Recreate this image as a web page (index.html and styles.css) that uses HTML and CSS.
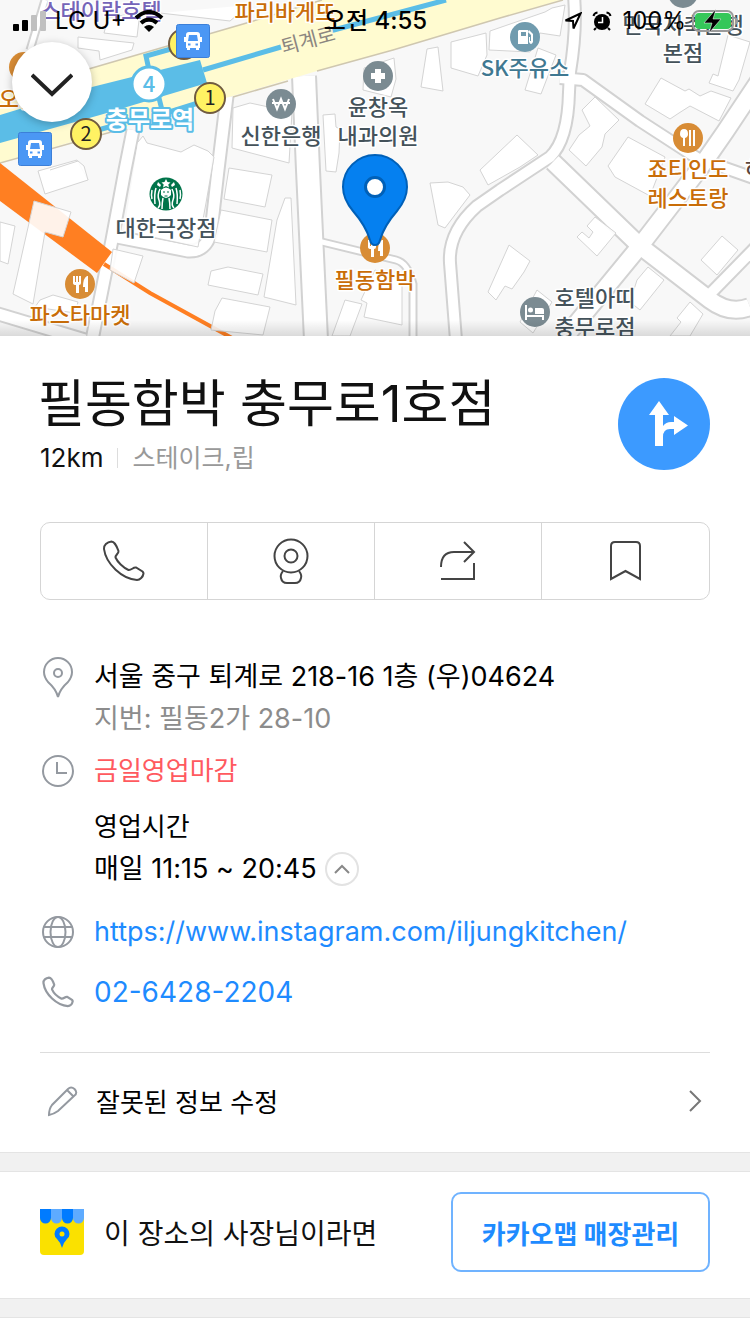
FILE: index.html
```
<!DOCTYPE html>
<html lang="ko">
<head>
    <meta charset="UTF-8">
    <meta name="viewport" content="width=device-width, initial-scale=1.0">
    <title>필동함박 충무로1호점</title>
    <link rel="stylesheet" href="styles.css">
</head>
<body>
    <section class="map">
        <svg class="map-canvas" viewBox="0 0 750 336" preserveAspectRatio="xMidYMin slice" role="img" aria-label="지도">
            <defs>
                <g id="roads">
                    <path class="w13" d="M133 130 L125 170 L112 240 L92 340"/>
                    <path class="w13" d="M112 236 L188 251 Q206 252 211 232 L218 170 L227 96"/>
                    <path class="w23" d="M304 76 L308 170 L316 340"/>
                    <path class="w4" d="M318 241 L396 260 Q408 263 413 284 L413 340"/>
                    <path class="w12" d="M574 -4 Q577 30 570 72 L569 92 Q568 140 550 157 L500 190 L477 206 Q448 232 450 263 L456 340"/>
                    <path class="w12" d="M560 78 L583 80 L640 121 L697 158 L765 182"/>
                    <path class="w18" d="M553 162 L640 246 L710 300 Q730 315 750 307"/>
                    <path class="w18" d="M765 72 L725 132 L700 168 L640 246 L566 336"/>
                    <path class="w12" d="M708 296 L755 248"/>
                    <path class="w13" d="M-5 313 L85 340"/>
                    <path class="w4" d="M45 0 L30 50"/>
                </g>
            </defs>
            <rect class="ground" width="750" height="336"/>
            <use href="#roads" class="road-edge"/>
            <use href="#roads" class="road-fill"/>

            <!-- main road -->
            <path class="main-road" d="M-5 97 L92 68 L250 22 L326 -2 L567 -2 L500 18 L393 50 L317 71 L250 91 L-5 164 Z"/>
            <path class="main-road-line" d="M0 95 L92 68 L250 22 L322 0 M0 163 L122 129 M233 97 L288 81 M317 71 L393 50 L500 18 L563 0"/>

            <!-- subway lines -->
            <path class="subway-area" d="M0 115 L92 87 L200 60 L207 83 L100 115 L0 143 Z"/>
            <path class="subway-line" d="M203 70 L281 47 M330 31 L446 0"/>
            <path class="subway-link" d="M149 70 L146 56 L178 47 M159 98 L163 114 L198 103 M98 130 L120 124"/>
            <path class="orange-area" d="M0 163 L112 252 L97 273 L0 201 Z"/>
            <path class="orange-line" d="M104 264 L150 293 L232 338"/>

            <!-- buildings -->
            <g class="buildings">
                <path d="M34 201 L71 212 L63 237 L45 232 L33 304 L13 294 L29 223 Z"/>
                <path d="M113 249 L143 256 L134 283 L110 270 Z"/>
                <path d="M38 171 L77 160 L88 180 L45 194 Z"/>
                <path d="M0 222 L15 226 L8 264 L0 261 Z"/>
                <path d="M78 37 L134 43 L132 50 L100 60 L99 51 L78 48 Z"/>
                <path d="M108 18 L140 12 L137 37 L104 33 Z"/>
                <path d="M160 13 L230 21 L249 5"/>
                <path d="M138 142 L143 136 L147 143 L181 152 L194 145 L208 151 L214 157 L206 203 L198 247 L124 231"/>
                <path d="M50 170 L78 161 L84 166 L88 180"/>
                <path d="M233 108 L250 103 L292 112 L289 163 L232 148 Z"/>
                <path d="M229 168 L272 175 L265 207 L224 199 Z"/>
                <path d="M221 210 L272 220 L267 252 L214 242 Z"/>
                <path d="M211 271 L228 267 L263 274 L258 295 L208 285 Z"/>
                <path d="M222 298 L270 307 L263 335 L211 330 L215 311 Z"/>
                <path d="M285 198 L291 198 L296 305 L264 297 L277 220 Z"/>
                <path d="M323 115 L335 114 L336 127 L340 129 L339 153 L336 172 L326 171 Z"/>
                <path d="M364 68 L394 58 L396 79 L391 97 L363 90 Z"/>
                <path d="M427 49 L438 47 L443 91 L421 87 Z"/>
                <path d="M451 42 L486 33 L487 55 L478 76 L451 68 Z"/>
                <path d="M490 31 L545 12 L552 8 L565 5 L560 36 L540 33 L530 52 L489 50 Z"/>
                <path d="M430 183 L448 182 L463 187 L470 195 L445 228 L438 225 Z"/>
                <path d="M538 48 L556 55 L541 94 L525 90 Z"/>
                <path d="M595 97 L619 120 L605 134 L602 147 L586 166 L569 150 L579 135 L590 126 L582 110 Z"/>
                <path d="M628 137 L665 157 L650 196 L615 177 L608 166 Z"/>
                <path d="M661 78 L685 91 L689 89 L700 96 L711 91 L731 98 L719 121 L694 108 L690 106 L679 113 L670 119 L645 104 Z"/>
                <path d="M728 35 L750 42 L739 80 L733 91 L709 83 L713 74 L718 76 Z"/>
                <path d="M517 135 L538 155 L520 167 L488 185 L480 170 Z"/>
                <path d="M595 217 L616 233 L597 256 L577 237 L582 232 L589 238 L593 232 L587 226 Z"/>
                <path d="M509 245 L530 261 L524 272 L512 289 L505 286 L496 300 L488 292 Z"/>
                <path d="M648 267 L664 280 L640 310 L630 302 L637 280 Z"/>
                <path d="M722 236 L738 250 L717 275 L701 260 Z"/>
                <path d="M690 302 L703 314 L690 336 L670 336 L681 322 L677 318 Z"/>
                <path d="M345 300 L362 304 L350 336 L332 336 Z"/>
                <path d="M375 270 L402 280 L402 325 L364 317 L367 303 L361 300 Z"/>
                <path d="M537 290 L552 302 L533 333 L520 322 Z"/>
                <path d="M53 295 L78 302 L75 313 L35 307 L40 300 Z"/>
            </g>

            <!-- place marks -->
            <g class="mark-gray">
                <circle cx="281" cy="104" r="15"/>
                <circle cx="378" cy="76" r="15"/>
                <circle cx="535" cy="312" r="15"/>
                <circle cx="683" cy="-7" r="15"/>
            </g>
            <g class="mark-orange">
                <circle cx="24" cy="67" r="15"/>
                <circle cx="80" cy="284" r="15"/>
                <circle cx="375" cy="248" r="15"/>
                <circle cx="688" cy="138" r="15"/>
            </g>
            <circle class="mark-teal" cx="525" cy="37" r="15"/>
            <path class="glyph-line" d="M273 99 L277 109 L281 99 L285 109 L289 99 M272 103 H290"/>
            <path class="glyph" d="M375 69 h6 v4 h4 v6 h-4 v4 h-6 v-4 h-4 v-6 h4 z"/>
            <path class="glyph" d="M525 305 h2 v10 h17 v5 h-2 v-3 h-15 v3 h-2 z M528 310 a2.500 2.500 0 1 0 5 0 a2.500 2.500 0 1 0 -5 0 M535 308 h7 q2 0 2 2 v4 h-9 z"/>
            <path class="glyph" fill-rule="evenodd" d="M519 30 h9 v14 h-10 v-13 z M521 32 v4 h5 v-4 z M529 30 l4 4 v8 q-2 4 -4 0 v-5 h1 v4 h1 v-6 l-3 -3 z"/>
            <g id="fork">
                <path class="glyph" d="M73 276 h2 v6 h1 v-6 h2 v6 h1 v-6 h2 v7 q0 2 -2 2 v8 h-3 v-8 q-3 0 -3 -2 z M87 276 h1 v16 h-3 v-5 h-2 q0 -9 4 -11 z"/>
            </g>
            <use href="#fork" x="295" y="-36"/>
            <path class="glyph" d="M680 134 q0 -5 4 -5 q4 0 4 5 q0 3 -3 4 v8 h-2 v-8 q-3 -1 -3 -4 z M689 130 h2 v16 h-2 z M693 130 h2 v16 h-2 z"/>

            <!-- coffee shop logo -->
            <circle cx="166" cy="194" r="16.500" fill="#00744a"/>
            <path class="glyph" d="M166 179 l1.500 3 3 .4 -2.200 2 .7 3 -3 -1.500 -3 1.500 .7 -3 -2.200 -2 3 -.4 z M158 182 l3 3 -1 2 -3 -2 z M174 182 l-3 3 1 2 3 -2 z"/>
            <path class="siren" d="M161 190 q5 -5 10 0 v5 q-5 6 -10 0 z"/>
            <path class="siren-line" d="M160 189 q-3 6 -1 11 t-1 8 M163 198 q-1 5 -1 11 M169 198 q1 5 1 11 M172 189 q3 6 1 11 t1 8 M156 188 q-2 6 -1 16 M176 188 q2 6 1 16 M152 190 q-1 5 0 9 M180 190 q1 5 0 9"/>
            <path d="M163 192 h2 M167 192 h2 M164.500 196 h3" stroke="#00744a" stroke-width="1"/>

            <!-- station exits and bus stops -->
            <g class="exit">
                <circle cx="184" cy="44" r="15"/>
                <circle cx="210" cy="98" r="15"/>
                <circle cx="86" cy="134" r="15"/>
                <text x="210" y="105">1</text>
                <text x="86" y="141">2</text>
            </g>
            <circle cx="149" cy="84" r="17" fill="#fff" stroke="#5bbde7" stroke-width="3"/>
            <text class="line-number" x="149" y="92">4</text>
            <g id="bus">
                <rect x="18.500" y="132.500" width="33" height="33" rx="2" fill="#4b97f4" stroke="#3c7fd8"/>
                <path class="glyph" fill-rule="evenodd" d="M28 143 q0 -3 3 -3 h8 q3 0 3 3 v2 h2 v5 h-2 v6 h-1 v2 h-3 v-2 h-6 v2 h-3 v-2 h-1 v-6 h-2 v-5 h2 z M31 143 l-1 6 h10 l-1 -6 z M30 151.500 v2 h2.500 v-2 z M37.500 151.500 v2 h2.500 v-2 z"/>
            </g>
            <use href="#bus" x="158" y="-108"/>

            <!-- labels -->
            <g class="label">
                <text class="purple" x="101" y="19">스테이락호텔</text>
                <text class="brown" x="285" y="20">파리바게뜨</text>
                <text class="brown" x="19" y="107">오늘</text>
                <text class="road-name" x="308" y="47" transform="rotate(-15 309 40)">퇴계로</text>
                <text class="station" x="150" y="128">충무로역</text>
                <text x="281" y="144">신한은행</text>
                <text x="378" y="115">윤창옥</text>
                <text x="378" y="144">내과의원</text>
                <text class="teal" x="525" y="76">SK주유소</text>
                <text x="683" y="33">민국저축은행</text>
                <text x="683" y="61">본점</text>
                <text class="brown" x="688" y="177">죠티인도</text>
                <text class="brown" x="688" y="206">레스토랑</text>
                <text class="dark" x="755" y="177">하</text>
                <text x="166" y="236">대한극장점</text>
                <text class="brown" x="80" y="323">파스타마켓</text>
                <text class="brown" x="375" y="288">필동함박</text>
                <text x="595" y="306">호텔아띠</text>
                <text x="595" y="335">충무로점</text>
            </g>

            <!-- selected place -->
            <path d="M375 245 Q371 245 370 240 Q366 226 353 211 Q343 199 343 187 A32 32 0 0 1 407 187 Q407 199 397 211 Q384 226 380 240 Q379 245 375 245 Z" fill="#0580f0" stroke="#0060b8" stroke-width="2"/>
            <circle cx="375" cy="187" r="9.500" fill="#fff" stroke="#0060b8" stroke-width="3"/>
        </svg>
        <div class="map-shade"></div>

        <div class="status-bar">
            <div class="status-left">
                <svg width="34" height="20" viewBox="0 0 34 20" aria-hidden="true">
                    <rect x="0" y="13" width="6" height="7" rx="1"/>
                    <rect x="9" y="9" width="6" height="11" rx="1"/>
                    <rect class="dim" x="18" y="4" width="6" height="16" rx="1"/>
                    <rect class="dim" x="27" y="0" width="6" height="20" rx="1"/>
                </svg>
                <span>LG U+</span>
                <svg width="30" height="22" viewBox="0 0 30 22" aria-hidden="true">
                    <path class="wifi" d="M2 8 Q15 -4 28 8 M7 13 Q15 6 23 13"/>
                    <path d="M10 17 Q15 13 20 17 L15 22 Z"/>
                </svg>
            </div>
            <span class="status-time">오전 4:55</span>
            <div class="status-right">
                <svg width="18" height="18" viewBox="0 0 18 18" aria-hidden="true">
                    <path class="location" d="M16.500 1.500 L1.500 8.500 L9 9 L9.500 16.500 Z"/>
                </svg>
                <svg width="20" height="20" viewBox="0 0 20 20" aria-hidden="true">
                    <circle cx="10" cy="11" r="8"/>
                    <path class="alarm" d="M1.500 5 Q2 2 5.500 1.500 M14.500 1.500 Q18 2 18.500 5 M4 17 L2 19 M16 17 L18 19"/>
                    <path d="M10.500 6 V11.500 H6" fill="none" stroke="#fff" stroke-width="1.500"/>
                </svg>
                <span class="battery">100%
                    <svg width="46" height="24" viewBox="0 0 46 24" aria-hidden="true">
                        <rect x="1" y="2" width="40" height="20" rx="6" fill="none" stroke="#9a9a9a" stroke-width="2"/>
                        <rect x="3" y="4" width="36" height="16" rx="4" fill="#35c759"/>
                        <path d="M43 8 q3 1 3 4 t-3 4 z" fill="#9a9a9a"/>
                        <path d="M24 0 L12 14 H20 L17 24 L29 10 H21 Z" stroke="#fff" stroke-width=".5"/>
                    </svg>
                </span>
            </div>
        </div>

        <button type="button" class="close-btn" aria-label="닫기">
            <svg width="42" height="24" viewBox="0 0 42 24" aria-hidden="true"><path d="M1 2 L21 21 L41 2"/></svg>
        </button>
    </section>

    <main>
        <section class="place">
            <header class="place-header">
                <div>
                    <h1>필동함박 충무로1호점</h1>
                    <p class="summary">12km<span class="category">스테이크,립</span></p>
                </div>
                <button type="button" class="route-btn" aria-label="길찾기">
                    <svg width="40" height="46" viewBox="0 0 40 46" aria-hidden="true"><path d="M11 0 L21 14 H15 V25 Q18 21 23 21 H26 V15 L40 24.500 L26 34 V28 H22 Q15 28 15 36 V45 H7 V14 H1 Z"/></svg>
                </button>
            </header>

            <div class="actions">
                <button type="button" aria-label="전화">
                    <svg width="44" height="44" viewBox="0 0 44 44" aria-hidden="true"><path id="phone" d="M9.500 2.500 C5 3 1.500 6 2 10 C4 25 20 40 35 41 C38 41 41 38 41.500 34.500 Q41.500 33.500 40.500 32.500 L34 28.500 C31 28 29.500 31.500 26.500 31 C21 28.500 15.500 23 13.500 18.500 C13 16 17 14.500 16.500 12 C15.500 9 12.500 2.500 9.500 2.500 Z"/></svg>
                </button>
                <button type="button" aria-label="로드뷰">
                    <svg width="36" height="46" viewBox="0 0 36 46" aria-hidden="true"><circle cx="18" cy="18" r="16.500"/><circle cx="18" cy="18" r="6.500"/><path d="M10 33 Q7 37 8 40 Q9 45 14 45 H22 Q27 45 28 40 Q29 37 26 33"/></svg>
                </button>
                <button type="button" aria-label="공유">
                    <svg width="36" height="40" viewBox="0 0 36 40" aria-hidden="true"><path d="M1 26 Q1 11 14 11 H34 M24 1 L34 11 L24 21 M34 22 V38 H1"/></svg>
                </button>
                <button type="button" aria-label="저장">
                    <svg width="32" height="40" viewBox="0 0 32 40" aria-hidden="true"><path d="M1 38 V5 Q1 1 5 1 H26 Q30 1 30 5 V38 L15.500 30 Z"/></svg>
                </button>
            </div>

            <div class="info">
                <div class="info-row">
                    <svg width="34" height="42" viewBox="0 0 34 42" aria-hidden="true"><path d="M16 41 Q14 33 6 26 Q2 21 2 16 A14 14 0 0 1 30 16 Q30 21 26 26 Q18 33 16 41 Z"/><circle cx="16" cy="17" r="4"/></svg>
                    <div class="address">
                        <p>서울 중구 퇴계로 218-16 1층 (우)04624</p>
                        <p class="muted">지번: 필동2가 28-10</p>
                    </div>
                </div>
                <div class="info-row">
                    <svg width="34" height="42" viewBox="0 0 34 42" aria-hidden="true"><circle cx="16" cy="21" r="15"/><path d="M15 12 V23 H25"/></svg>
                    <div>
                        <p class="closed">금일영업마감</p>
                        <div class="hours">
                            <p>영업시간</p>
                            <p class="hours-line">매일 11:15 ~ 20:45
                                <button type="button" class="fold-btn" aria-label="접기">
                                    <svg width="16" height="10" viewBox="0 0 16 10" aria-hidden="true"><path d="M1 9 L8 2 L15 9"/></svg>
                                </button>
                            </p>
                        </div>
                    </div>
                </div>
                <div class="info-row contact">
                    <svg width="34" height="42" viewBox="0 0 34 42" aria-hidden="true"><circle cx="16" cy="21" r="15"/><ellipse cx="16" cy="21" rx="7.500" ry="15"/><path d="M2 16 H30 M2 26 H30"/></svg>
                    <a href="https://www.instagram.com/iljungkitchen/">https://www.instagram.com/iljungkitchen/</a>
                </div>
                <div class="info-row contact">
                    <svg class="small-phone" width="34" height="42" viewBox="0 -6 46 56" aria-hidden="true"><use href="#phone"/></svg>
                    <a class="tel" href="tel:02-6428-2204">02-6428-2204</a>
                </div>
            </div>

            <a class="edit" href="#edit">
                <svg width="32" height="32" viewBox="0 0 32 32" aria-hidden="true"><path d="M3 30 Q3 24 6 20 L22 4 Q25 1 28.500 4 Q32 7.500 28.500 10.500 L12 26 Q8 29 3 30 Z M21 5 L27.500 11.500"/></svg>
                <span>잘못된 정보 수정</span>
                <svg class="chevron" width="14" height="22" viewBox="0 0 14 22" aria-hidden="true"><path d="M2 1 L12 11 L2 21"/></svg>
            </a>
        </section>

        <div class="gap"></div>

        <section class="owner">
            <svg width="44" height="46" viewBox="0 0 44 46" aria-hidden="true">
                <path d="M0 0 H44 V42 Q44 46 40 46 H4 Q0 46 0 42 Z" fill="#fae100"/>
                <path d="M0 0 H11 V9 A5.500 5.500 0 0 1 0 9 Z M22 0 H33 V9 A5.500 5.500 0 0 1 22 9 Z" fill="#007bff"/>
                <path d="M11 0 H22 V9 A5.500 5.500 0 0 1 11 9 Z M33 0 H44 V9 A5.500 5.500 0 0 1 33 9 Z" fill="#5eabff"/>
                <path d="M22 39 Q21 34 17 30 Q14.500 28 14.500 25 A7.500 7.500 0 0 1 29.500 25 Q29.500 28 27 30 Q23 34 22 39 Z" fill="#007bff"/>
                <circle cx="22" cy="25" r="2.500" fill="#fae100"/>
            </svg>
            <p>이 장소의 사장님이라면</p>
            <button type="button" class="manage-btn">카카오맵 매장관리</button>
        </section>

        <div class="gap"></div>
    </main>
</body>
</html>
```
FILE: styles.css
```
* {
    box-sizing: border-box;
}
body {
    font-family: Inter, "Noto Sans CJK KR", sans-serif;
    font-size: 26px;
    margin: 0;
    background-color: #fff;
    color: #111;
}
h1, p {
    margin: 0;
    font-weight: 400;
}
button {
    font: inherit;
    padding: 0;
    cursor: pointer;
}
a {
    color: #1e8bff;
    text-decoration: none;
}

/* map */
.map {
    position: relative;
    height: 336px;
    overflow: hidden;
}
.map-canvas {
    display: block;
    width: 100%;
    height: 100%;
}
.map-shade {
    position: absolute;
    left: 0;
    right: 0;
    bottom: 0;
    height: 16px;
    background: linear-gradient(rgba(0,0,0,0), rgba(0,0,0,0.12));
}
.ground {
    fill: #f8f8f8;
}
.road-edge, .road-fill {
    fill: none;
    stroke-linejoin: round;
}
.road-edge {
    stroke: #d2d2d2;
    --edge: 4px;
}
.road-fill {
    stroke: #fff;
    --edge: 0px;
}
.w4 {
    stroke-width: calc(5px + var(--edge));
}
.w12 {
    stroke-width: calc(10px + var(--edge));
}
.w13 {
    stroke-width: calc(11px + var(--edge));
}
.w18 {
    stroke-width: calc(16px + var(--edge));
}
.w23 {
    stroke-width: calc(22px + var(--edge));
}
.main-road {
    fill: #fffbd0;
}
.main-road-line {
    fill: none;
    stroke: #cfc7b0;
    stroke-width: 1.5;
}
.subway-area {
    fill: #5bbde7;
}
.subway-line, .subway-link {
    fill: none;
    stroke: #5bbde7;
    stroke-width: 5;
}
.orange-area {
    fill: #ff7f22;
}
.orange-line {
    fill: none;
    stroke: #ff7f22;
    stroke-width: 4;
}
.buildings {
    fill: rgba(255,255,255,0.9);
    stroke: #d4d4d4;
}
.mark-gray {
    fill: #7b8b92;
}
.mark-orange {
    fill: #d88c35;
}
.mark-teal {
    fill: #709bae;
}
.glyph, .siren {
    fill: #fff;
}
.glyph-line {
    fill: none;
    stroke: #fff;
    stroke-width: 2;
}
.siren-line {
    fill: none;
    stroke: #fff;
    stroke-width: 1.5;
}
.exit circle {
    fill: #fff263;
    stroke: #705b40;
    stroke-width: 2;
}
.exit text, .line-number {
    font-family: "Noto Sans CJK KR", sans-serif;
    font-size: 20px;
    text-anchor: middle;
    fill: #222;
}
.line-number {
    font-size: 22px;
    font-weight: 500;
    fill: #5bbde7;
}
.label {
    font-family: "Noto Sans CJK KR", sans-serif;
    font-size: 22px;
    font-weight: 500;
    text-anchor: middle;
    fill: #44525a;
    stroke: #fff;
    stroke-width: 3;
    stroke-linejoin: round;
    paint-order: stroke;
}
.label .purple {
    fill: #7564b8;
}
.label .brown {
    fill: #c96d08;
}
.label .teal {
    fill: #3f7891;
}
.label .dark {
    fill: #5b463d;
}
.label .road-name {
    font-size: 20px;
    font-weight: 400;
    fill: #8c8680;
    stroke: #fffbd0;
}
.label .station {
    font-size: 24px;
    font-weight: 700;
    fill: #fff;
    stroke: #5bbde7;
    stroke-width: 4;
}

/* status bar */
.status-bar {
    position: absolute;
    top: 0;
    left: 0;
    right: 0;
    display: grid;
    grid-template-columns: 1fr auto 1fr;
    align-items: center;
    padding: 0 12px 0 13px;
    font-size: 24px;
    line-height: 42px;
    color: #000;
}
.status-left, .status-right {
    display: flex;
    align-items: center;
    gap: 10px;
}
.status-left {
    gap: 8px;
}
.status-right {
    justify-content: flex-end;
}
.status-time {
    font-weight: 500;
}
.battery {
    display: flex;
    align-items: center;
    gap: 6px;
}
.dim {
    fill: #c0c0c0;
}
.wifi {
    fill: none;
    stroke: #000;
    stroke-width: 4;
}
.location, .alarm {
    fill: none;
    stroke: #000;
    stroke-width: 2;
}
.close-btn {
    position: absolute;
    top: 42px;
    left: 12px;
    display: flex;
    align-items: center;
    justify-content: center;
    width: 80px;
    height: 80px;
    padding-top: 6px;
    border: none;
    border-radius: 50%;
    background-color: #fff;
    box-shadow: 0 2px 8px rgba(0,0,0,0.25);
}
.close-btn path {
    fill: none;
    stroke: #222;
    stroke-width: 4;
}

/* place */
.place {
    padding: 36px 40px 0;
}
.place-header {
    display: flex;
    align-items: flex-start;
    justify-content: space-between;
}
h1 {
    margin-left: -2px;
    font-size: 51px;
    line-height: 64px;
}
.summary {
    display: flex;
    align-items: center;
    line-height: 44px;
}
.category {
    display: flex;
    align-items: center;
    font-size: 25px;
    color: #999;
}
.category::before {
    content: "";
    width: 1px;
    height: 20px;
    margin: 0 14px;
    background-color: #ddd;
}
.route-btn {
    display: flex;
    align-items: center;
    justify-content: center;
    flex: none;
    width: 92px;
    height: 92px;
    margin-top: 6px;
    padding-left: 8px;
    border: none;
    border-radius: 50%;
    background-color: #3c9aff;
}
.route-btn path {
    fill: #fff;
}
.actions {
    display: grid;
    grid-template-columns: repeat(4, 1fr);
    height: 78px;
    margin-top: 42px;
    border: 1px solid #d5d5d5;
    border-radius: 10px;
}
.actions button {
    display: flex;
    align-items: center;
    justify-content: center;
    border: none;
    background: none;
}
.actions button:not(:last-child) {
    border-right: 1px solid #d5d5d5;
}
.actions svg {
    fill: none;
    stroke: #444;
    stroke-width: 2;
}
.info {
    display: grid;
    gap: 10px;
    margin-top: 56px;
    line-height: 42px;
    color: #000;
}
.info-row {
    display: grid;
    grid-template-columns: 34px 1fr;
    column-gap: 18px;
    padding-left: 2px;
}
.info-row > svg, .edit svg {
    fill: none;
    stroke: #9499a0;
    stroke-width: 2;
}
.info-row > .small-phone {
    stroke-width: 3;
}
.contact {
    margin-top: 8px;
}
.address, .contact {
    font-size: 27px;
}
.tel {
    font-size: 28px;
}
.muted {
    color: #8c8c8c;
}
.closed {
    color: #ff5a5f;
}
.hours {
    padding: 14px 0 3px;
}
.hours-line {
    display: flex;
    align-items: center;
    gap: 8px;
    font-size: 27px;
}
.fold-btn {
    display: flex;
    align-items: center;
    justify-content: center;
    width: 34px;
    height: 34px;
    border: 2px solid #e3e3e3;
    border-radius: 50%;
    background-color: #fff;
}
.fold-btn path {
    fill: none;
    stroke: #888;
    stroke-width: 2;
}
.edit {
    display: flex;
    align-items: center;
    height: 100px;
    margin-top: 39px;
    padding: 0 8px 4px 6px;
    border-top: 1px solid #ddd;
    color: #000;
}
.edit span {
    flex: 1;
    margin-left: 18px;
}
.edit .chevron {
    stroke: #777;
}

/* grey strip between sections */
.gap {
    height: 20px;
    border: solid #e4e4e4;
    border-width: 1px 0;
    background-color: #f1f1f1;
}

/* owner */
.owner {
    display: flex;
    align-items: center;
    padding: 20px 40px 26px;
}
.owner p {
    flex: 1;
    margin-left: 20px;
    font-size: 28px;
}
.manage-btn {
    min-width: 259px;
    height: 80px;
    border: 2px solid #70b3ff;
    border-radius: 10px;
    background-color: #fff;
    color: #1e8bff;
    font-weight: 700;
}
```
